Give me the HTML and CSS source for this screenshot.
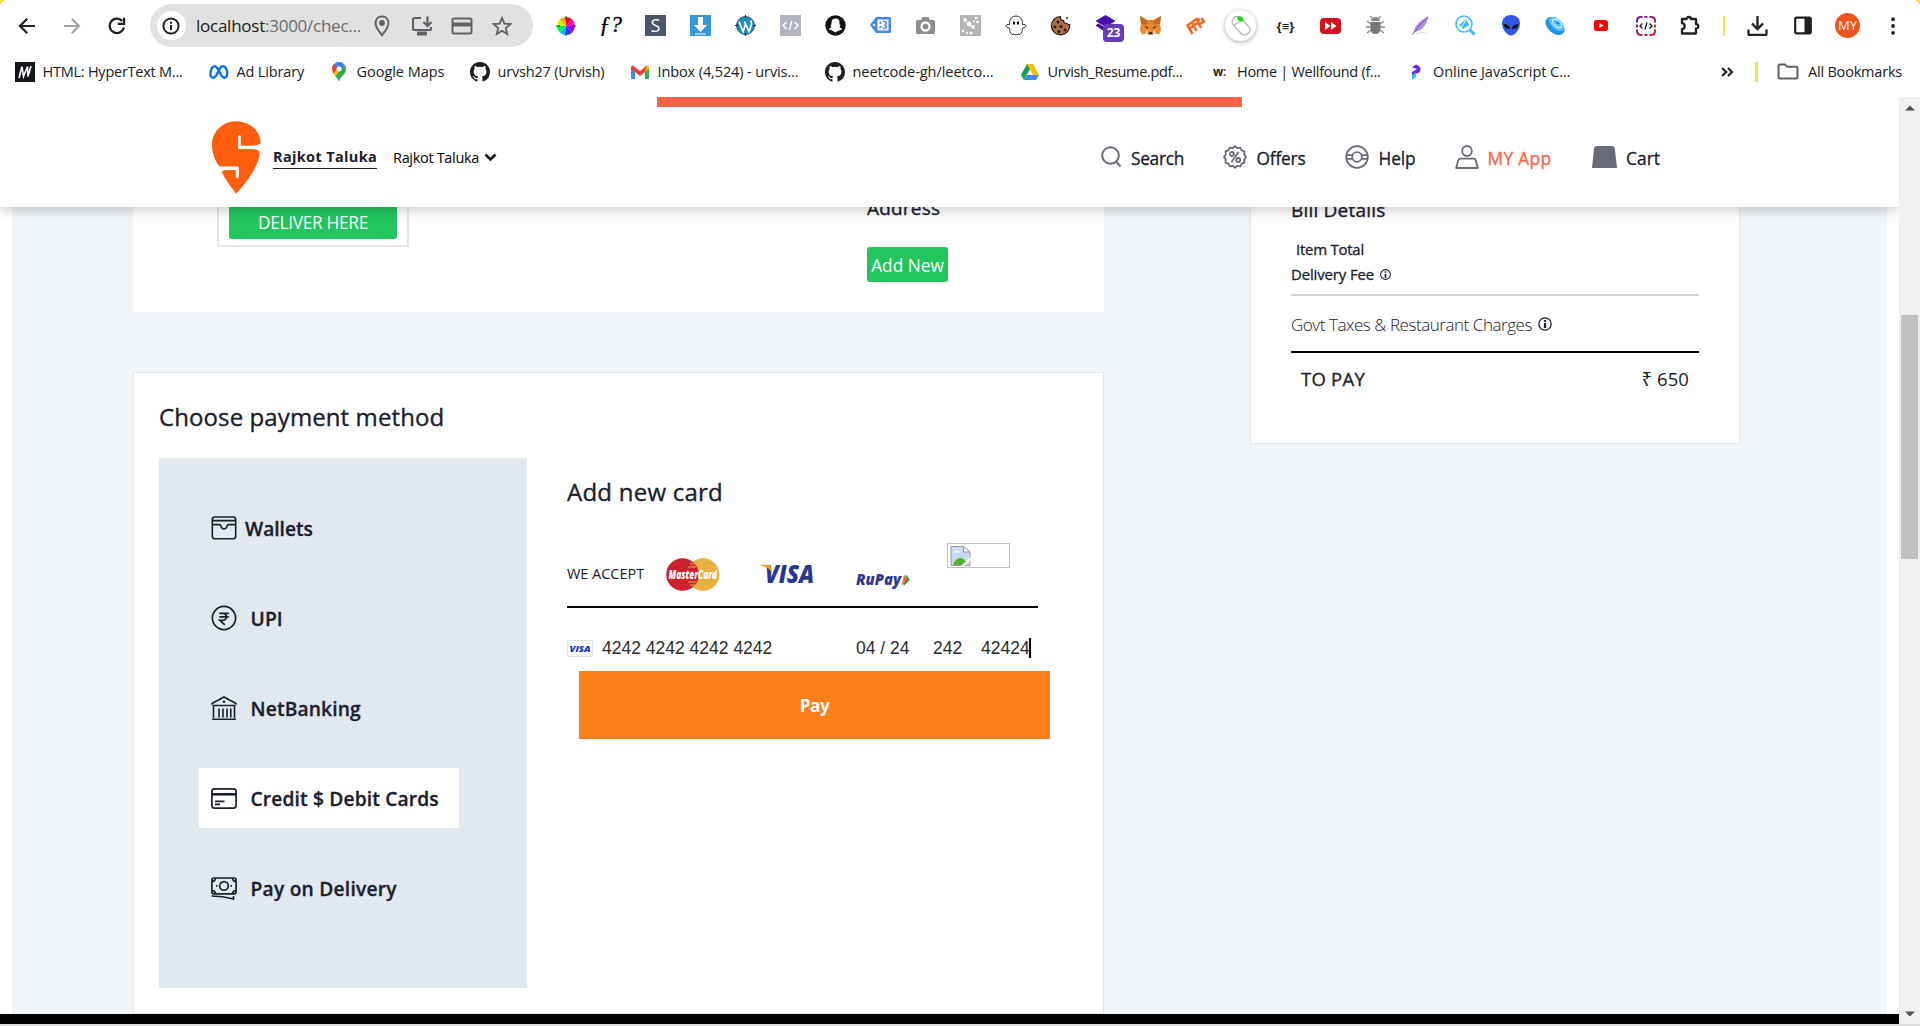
FILE: index.html
```html
<!DOCTYPE html>
<html lang="en">
<head>
<meta charset="utf-8">
<title>Checkout</title>
<link rel="stylesheet" href="styles.css">
</head>
<body>
<div class="browser">
  <div class="toolbar">
    <div class="navcell"><svg width="18" height="18" viewBox="0 0 18 18" fill="none" stroke="#202124" stroke-width="2.2"><path d="M17 9H2.5M9.2 1.8L2 9l7.2 7.2"/></svg></div>
    <div class="navcell"><svg width="18" height="18" viewBox="0 0 18 18" fill="none" stroke="#a3a3a3" stroke-width="2.2"><path d="M1 9h14.500M8.800 1.800L16 9l-7.200 7.200"/></svg></div>
    <div class="navcell"><svg width="18" height="18" viewBox="0 0 18 18" fill="none" stroke="#202124" stroke-width="2.3"><path d="M15.900 10.500A7.200 7.200 0 1 1 14.200 4"/><path d="M16 .8v6.100H9.800"/></svg></div>
    <div class="omnibox">
      <div class="siteinfo"><svg width="18" height="18" viewBox="0 0 18 18" fill="none" stroke="#202124" stroke-width="2"><circle cx="9" cy="9" r="7.600"/><path d="M9 8v5M9 4.800v2"/></svg></div>
      <div class="url">localhost<span class="dim">:3000/chec...</span></div>
      <div class="omnicell"><svg width="18" height="22" viewBox="0 0 18 22"><path d="M9 1.600C5 1.600 2.500 4.600 2.500 8.200c0 4.300 3.800 8.300 6.500 12 2.700-3.700 6.500-7.700 6.500-12 0-3.600-2.500-6.600-6.500-6.600z" fill="none" stroke="#5f6368" stroke-width="2"/><circle cx="9" cy="8" r="2.900" fill="#5f6368"/></svg></div>
      <div class="omnicell"><svg width="22" height="20" viewBox="0 0 22 20" fill="none" stroke="#5f6368" stroke-width="2.200"><path d="M10 2H3.500Q2 2 2 3.500v9Q2 14 3.500 14h15q1.500 0 1.500-1.500V11M16.500.5v9M12.500 6l4 4 4-4"/><path d="M6 17.500h10" stroke-width="4"/></svg></div>
      <div class="omnicell"><svg width="22" height="18" viewBox="0 0 22 18"><rect x="1.500" y="1.500" width="19" height="15" rx="1.500" fill="none" stroke="#5f6368" stroke-width="2"/><path d="M1.500 5.500h19v4h-19z" fill="#5f6368"/></svg></div>
      <div class="omnicell"><svg width="20" height="20" viewBox="0 0 20 20" fill="none" stroke="#5f6368" stroke-width="1.900"><path d="M10 2l2.400 5.600 6 .5-4.600 4 1.400 5.900L10 14.800 4.800 18l1.400-5.900-4.600-4 6-.5z"/></svg></div>
    </div>
    <div class="extensions">
      <div class="ext"><svg width="20" height="20" viewBox="0 0 20 20"><g><path d="M10 10V1A9 9 0 0 1 16.400 3.600z" fill="#f03"/><path d="M10 10l6.400-6.400A9 9 0 0 1 19 10z" fill="#f0c"/><path d="M10 10h9a9 9 0 0 1-2.600 6.400z" fill="#90f"/><path d="M10 10l6.400 6.400A9 9 0 0 1 10 19z" fill="#33f"/><path d="M10 10v9a9 9 0 0 1-6.400-2.600z" fill="#0bf"/><path d="M10 10l-6.400 6.400A9 9 0 0 1 1 10z" fill="#0e5"/><path d="M10 10H1a9 9 0 0 1 2.600-6.400z" fill="#bf0"/><path d="M10 10L3.600 3.600A9 9 0 0 1 10 1z" fill="#fa0"/></g><path d="M10 0v4M10 16v4M0 10h4M16 10h4" stroke="#333" stroke-width="1"/></svg></div>
      <div class="ext fq">ƒ?</div>
      <div class="ext"><span class="sq s">S</span></div>
      <div class="ext"><svg width="21" height="21" viewBox="0 0 21 21"><path d="M0 0h21v21H0z" fill="#3498db"/><path d="M8 2h5v8h4l-6.500 7L4 10h4zM5 18.500h11v1H5z" fill="#fff"/></svg></div>
      <div class="ext"><svg width="21" height="21" viewBox="0 0 21 21"><circle cx="10.500" cy="10.500" r="9" fill="#1c8fc0"/><path d="M4 6.500l4 10 2.500-7-1-3M9.500 6.500l4.500 10 2.500-7q.5-2-1-4" stroke="#fff" stroke-width="1.700" fill="none"/><circle cx="10.500" cy="10.500" r="9" fill="none" stroke="#356"/><path d="M10.500 0v3M10.500 18v3M0 10.500h3M18 10.500h3" stroke="#222"/></svg></div>
      <div class="ext"><svg width="21" height="21" viewBox="0 0 21 21"><path d="M0 0h21v21H0z" fill="#b0b3bf"/><path d="M6.500 7L3 10.500 6.500 14M14.500 7l3.500 3.500-3.500 3.500M11.800 6l-2.500 9" stroke="#fff" stroke-width="1.500" fill="none"/></svg></div>
      <div class="ext"><svg width="21" height="21" viewBox="0 0 21 21"><circle cx="10.500" cy="10.500" r="10.200" fill="#111"/><path d="M10.500 3.500c3 0 4 2 4 4v2l1.300.6-1.200 1.200c.5 1.500 1.400 2.200 2.600 2.600-.4 1-1.700 1-2.500 1.200-.6 1.500-2 .5-4.200 2.400-2.200-1.900-3.600-.9-4.200-2.400-.8-.2-2.100-.2-2.500-1.200 1.200-.4 2.100-1.100 2.600-2.600L5.200 10.100l1.300-.6v-2c0-2 1-4 4-4z" fill="#fff"/></svg></div>
      <div class="ext"><svg width="21" height="17" viewBox="0 0 21 17"><path d="M6 0h13.500Q21 0 21 1.500v13q0 1.500-1.500 1.500H6L0 8z" fill="#4285f4"/><path d="M7.500 2.500h11v11h-11z" fill="#fff"/><circle cx="4" cy="8" r="1.200" fill="#fff"/><path d="M9.500 4.800h2v2h-2zm0 4.200h2v2h-2z" fill="#4285f4"/><path d="M13 4.500h1.500q2 0 1.700 1.800-.2 1.200-1 1.700.8.500 1 1.700.3 1.800-1.700 1.800H13" fill="none" stroke="#4285f4" stroke-width="1.500"/></svg></div>
      <div class="ext"><svg width="19" height="17" viewBox="0 0 19 17"><path d="M2 3h3l1.500-3h6L14 3h3.500Q19 3 19 4.500v11q0 1.500-1.500 1.500h-16Q0 17 0 15.500V4.500Q0 3 2 3z" fill="#8e8e8e"/><circle cx="9.500" cy="9.500" r="4" fill="none" stroke="#fff" stroke-width="2.300"/></svg></div>
      <div class="ext"><svg width="21" height="21" viewBox="0 0 21 21"><path d="M0 0h21v21H0z" fill="#b5b5b5"/><g fill="#fff"><circle cx="5" cy="5" r="2"/><circle cx="9" cy="9" r="2.500"/><circle cx="13" cy="12" r="2"/><circle cx="16" cy="3" r="1.300"/><circle cx="17.500" cy="7" r="1.300"/><circle cx="3" cy="16" r="1.300"/><circle cx="7" cy="18" r="1.300"/><circle cx="11" cy="18" r="1.300"/><circle cx="14" cy="6" r="1"/></g></svg></div>
      <div class="ext"><svg width="22" height="21" viewBox="0 0 22 21"><path d="M4.500 9.500V7.500a6.500 6.500 0 0 1 13 0v2q3.500-.5 3.500 1.300 0 1.700-3.500 2.400.2 4.300-2.500 6.300-2-1-4 .5-2-1.500-4-.5-2.700-2-2.500-6.300Q1 12.500 1 10.800q0-1.800 3.500-1.300z" fill="#fff" stroke="#333" stroke-width="1"/><path d="M9 6.500v3M13 6.500v3" stroke="#111" stroke-width="2"/></svg></div>
      <div class="ext"><svg width="21" height="21" viewBox="0 0 21 21"><path d="M10.500 1.500a3 3 0 0 0 3 4q0 3 3.500 3 1 1.500 2.700 1a9.200 9.200 0 1 1-9.200-8z" fill="#a9714b" stroke="#2e1a12" stroke-width="1.200"/><g fill="#2b1710"><circle cx="8" cy="7" r="1.500"/><circle cx="5" cy="12" r="1.400"/><circle cx="11" cy="11.500" r="1.600"/><circle cx="9" cy="16.500" r="1.500"/><circle cx="15" cy="15" r="1.400"/><circle cx="17" cy="3" r="1"/></g></svg></div>
      <div class="ext stack"><svg width="22" height="21" viewBox="0 0 22 21"><path d="M10.500 0l10 6-10 6-10-6z" fill="#4a0db0"/><path d="M.5 10.500l3-2 7 4.500 7-4.500 3 2-10 6.500z" fill="#3b0a86"/></svg><span class="badge">23</span></div>
      <div class="ext"><svg width="21" height="19" viewBox="0 0 21 19"><path d="M0 0l7.500 4h6L21 0l-1 8 1 6-2 4.500-5-1-1.500 1.500h-4L7 17.500l-5 1L0 14l1-6z" fill="#f0862c"/><path d="M0 0l8 5-1.500 4L1 8zM21 0l-8 5 1.500 4L20 8z" fill="#c96a27"/><path d="M4 10l4 1v2zM17 10l-4 1v2zM8.500 16h4v2h-4z" fill="#263340"/><path d="M6 14l2.500 2-.5 2H5zM15 14l-2.500 2 .5 2h3z" fill="#e3cdb5"/></svg></div>
      <div class="ext"><svg width="20" height="19" viewBox="0 0 20 19" fill="none" stroke="#f26a21" stroke-width="2.500"><path d="M6.500 18L1.500 9.500 10.500 3l4.500 9M6 6.500l4.500 8.500M3.500 12.500l8-5.500M12 2l1.500 3M13 8.500l5-3L15.500 2"/></svg></div>
      <div class="ext"><span class="mouse"><svg width="22" height="22" viewBox="0 0 22 22"><path d="M3 4q2-4 7-2l9 10q2.500 3.500-1 6.500t-6.500.500L2.500 9Q1.500 6 3 4zM4 10l9-5" fill="#fff" stroke="#b4b4b4" stroke-width="1.200"/><path d="M7 1l5 .8 2 3.700-3.500 1.500L8 5z" fill="#1ed41e"/></svg></span></div>
      <div class="ext braces">{≡}</div>
      <div class="ext"><svg width="21" height="16" viewBox="0 0 21 16"><rect width="21" height="16" rx="4" fill="#d0141c"/><path d="M5 4l5.500 4L5 12zM11 4l5.500 4L11 12z" fill="#fff"/></svg></div>
      <div class="ext"><svg width="19" height="19" viewBox="0 0 19 19"><path d="M5 5q0-4 4.500-4T14 5z" fill="#888"/><path d="M4.500 6h10v6q0 6-5 6t-5-6z" fill="#777"/><path d="M1 5l4 3M18 5l-4 3M0 11h5M19 11h-5M1 17l4-3M18 17l-4-3M6 2L4 0M13 2l2-2" stroke="#888" stroke-width="1.300"/></svg></div>
      <div class="ext"><svg width="18" height="20" viewBox="0 0 18 20"><path d="M16.500.5C8 4 3 9 2 16c8-1 12-6 14.500-15.500z" fill="#b190dd"/><path d="M16 1Q6 10 .5 18.500" stroke="#6e46a8" fill="none"/><path d="M3 18q6-2.500 12-1" stroke="#ddd" fill="none"/></svg></div>
      <div class="ext"><svg width="21" height="21" viewBox="0 0 21 21" fill="none" stroke="#35bdf0"><circle cx="9" cy="9" r="8" stroke-width="1.500"/><path d="M14.500 14.500l5 5" stroke-width="3"/><path d="M4 10l7-6 3 6-6 4z" fill="#35bdf0" stroke="none"/><path d="M6 13l5-8" stroke="#fff"/></svg></div>
      <div class="ext"><svg width="20" height="21" viewBox="0 0 20 21"><path d="M10 0c5.500 0 9 3.500 9 8.500C19 14 14 20.500 10 20.500S1 14 1 8.500C1 3.500 4.500 0 10 0z" fill="#3058e8"/><path d="M2.500 9q6 0 6.500 5-5.500.5-6.500-5zM17.500 9q-6 0-6.500 5 5.500.5 6.500-5z" fill="#111"/></svg></div>
      <div class="ext"><svg width="21" height="20" viewBox="0 0 21 20"><ellipse cx="10" cy="10" rx="11" ry="7.200" transform="rotate(42 10 10)" fill="#2094ea"/><ellipse cx="11.500" cy="8" rx="9" ry="5" transform="rotate(42 11.500 8)" fill="#5cc4fb"/><ellipse cx="12" cy="7.500" rx="5.500" ry="3" transform="rotate(42 12 7.500)" fill="none" stroke="#eaf7ff"/><circle cx="13" cy="7" r="1.500" fill="#1686dd"/></svg></div>
      <div class="ext"><svg width="14" height="11" viewBox="0 0 14 11"><rect width="14" height="11" rx="2.800" fill="#f00"/><path d="M5.500 3l4 2.500-4 2.500z" fill="#fff"/></svg></div>
      <div class="ext"><svg width="20" height="20" viewBox="0 0 20 20" fill="none" stroke-width="2"><path d="M1 6.500V5Q1 1 5 1h1.500" stroke="#5b2aa0"/><path d="M8.500 1h3M13.500 1H15q4 0 4 4v1.500M1 8.500v3" stroke="#8e2376"/><path d="M1 13.500V15q0 4 4 4h1.500M8.500 19h3" stroke="#a81d60"/><path d="M19 8.500v3M13.500 19H15q4 0 4-4v-1.500" stroke="#e0232b"/><path d="M6.500 7.500L4 10l2.500 2.500M13.500 7.500L16 10l-2.500 2.500M11 6.500l-2 7" stroke="#111" stroke-width="1.300"/></svg></div>
      <div class="ext"><svg width="21" height="21" viewBox="0 0 21 21"><path d="M2 4h4.800q0-2 2-2t2 2H16v5.200q2.300 0 2.300 2.200T16 13.500v5H2v-4.300q2.700-.4 2.700-3T2 8.200z" fill="none" stroke="#202124" stroke-width="2.300" stroke-linejoin="round"/></svg></div>
    </div>
    <div class="divider"></div>
    <div class="ext"><svg width="21" height="20" viewBox="0 0 21 20" fill="none" stroke="#202124" stroke-width="2.300"><path d="M10.500 0v13M5 7.500l5.500 5.500L16 7.500M1.500 13.500V18q0 1 1 1h16q1 0 1-1v-4.500"/></svg></div>
    <div class="ext"><svg width="18" height="19" viewBox="0 0 18 19"><rect x="1.200" y="1.700" width="15.600" height="15.600" rx="1.500" fill="none" stroke="#202124" stroke-width="2.200"/><path d="M10.500 2h6.500v15h-6.500z" fill="#202124"/></svg></div>
    <div class="ext"><span class="avatar">MY</span></div>
    <div class="ext"><svg width="4" height="18" viewBox="0 0 4 18" fill="#202124"><circle cx="2" cy="2.200" r="1.900"/><circle cx="2" cy="9" r="1.900"/><circle cx="2" cy="15.800" r="1.900"/></svg></div>
  </div>
  <div class="bookmarks">
    <div class="bm b1"><svg width="20" height="20" viewBox="0 0 20 20"><path d="M0 0h20v20H0z" fill="#15141a"/><path d="M4 16L7 4.500l1.500 10 4-10 .5 10L16 4" fill="none" stroke="#fff" stroke-width="1.600"/></svg><span>HTML: HyperText M...</span></div>
    <div class="bm b2"><svg width="20" height="20" viewBox="0 0 20 20"><path d="M1.500 13C1.500 8 3 4.200 5.800 4.200c4 0 5.200 11.500 9.700 11.500 4.500 0 3.200-11.500-1.800-11.500-4.200 0-5 11.500-9.500 11.500-1.700 0-2.700-1-2.700-2.700z" fill="none" stroke="#0a6ff0" stroke-width="2.400"/></svg><span>Ad Library</span></div>
    <div class="bm b3"><svg width="20" height="20" viewBox="0 0 20 20"><path d="M3 7a7 7 0 0 1 14 0z" fill="#4285f4"/><path d="M3 7a7 7 0 0 1 2-5l5 5-5 5Q3 9.500 3 7z" fill="#ea4335"/><path d="M4.500 11.500L10 5l3 3-6.500 7z" fill="#fbbc04"/><path d="M17 7c0 6-5.500 6-7 13-.7-2.500-2-4-3.500-6L15.500 3Q17 5 17 7z" fill="#34a853"/><path d="M6 1.500Q10-1.500 14 1.500L9 7z" fill="#4285f4"/><circle cx="10" cy="7" r="2.500" fill="#fff"/></svg><span>Google Maps</span></div>
    <div class="bm b4"><svg width="20" height="20" viewBox="0 0 16 16"><path fill="#1b1f23" d="M8 0C3.580 0 0 3.580 0 8c0 3.540 2.290 6.530 5.470 7.590.4.070.55-.17.55-.38 0-.19-.01-.82-.01-1.490-2.010.37-2.530-.49-2.690-.94-.09-.23-.48-.94-.82-1.130-.28-.15-.68-.52-.01-.53.630-.01 1.080.58 1.230.82.720 1.210 1.870.87 2.330.66.070-.52.280-.87.510-1.070-1.780-.2-3.640-.89-3.640-3.950 0-.87.310-1.590.820-2.150-.08-.2-.36-1.020.080-2.120 0 0 .67-.21 2.200.82a7.600 7.600 0 0 1 4 0c1.530-1.040 2.200-.82 2.200-.82.440 1.100.160 1.920.080 2.120.510.560.820 1.270.820 2.150 0 3.070-1.870 3.750-3.650 3.950.290.250.540.730.540 1.480 0 1.070-.01 1.930-.01 2.200 0 .210.150.460.550.380A8.010 8.010 0 0 0 16 8c0-4.420-3.580-8-8-8z"/></svg><span>urvsh27 (Urvish)</span></div>
    <div class="bm b5"><svg width="20" height="20" viewBox="0 0 20 20"><path d="M1 5v11q0 1 1 1h3V8z" fill="#4285f4"/><path d="M19 5v11q0 1-1 1h-3V8z" fill="#34a853"/><path d="M15 5l2-1.500q2 0 2 2V7l-4 3z" fill="#fbbc04"/><path d="M1 7V5.500q0-2 2-2L10 9l7-5.500L15 10l-5 4-5-4z" fill="#ea4335"/></svg><span>Inbox (4,524) - urvis...</span></div>
    <div class="bm b6"><svg width="20" height="20" viewBox="0 0 16 16"><path fill="#1b1f23" d="M8 0C3.580 0 0 3.580 0 8c0 3.540 2.290 6.530 5.470 7.590.4.070.55-.17.55-.38 0-.19-.01-.82-.01-1.490-2.010.37-2.530-.49-2.690-.94-.09-.23-.48-.94-.82-1.130-.28-.15-.68-.52-.01-.53.630-.01 1.080.58 1.230.82.720 1.210 1.870.87 2.330.66.070-.52.280-.87.510-1.070-1.780-.2-3.640-.89-3.640-3.950 0-.87.310-1.590.820-2.150-.08-.2-.36-1.020.080-2.120 0 0 .67-.21 2.200.82a7.600 7.600 0 0 1 4 0c1.530-1.040 2.200-.82 2.200-.82.440 1.100.160 1.920.080 2.120.510.560.820 1.270.820 2.150 0 3.070-1.870 3.750-3.650 3.950.290.250.540.730.540 1.480 0 1.070-.01 1.930-.01 2.200 0 .210.150.460.550.380A8.010 8.010 0 0 0 16 8c0-4.420-3.580-8-8-8z"/></svg><span>neetcode-gh/leetco...</span></div>
    <div class="bm b7"><svg width="20" height="20" viewBox="0 0 20 20"><path d="M7 2h6L7 12.500l-3 5.500-3-5z" fill="#0f9d58"/><path d="M7 2h6l6 11h-6z" fill="#fbbc04"/><path d="M7 13h12l-3 5H4z" fill="#4285f4"/><path d="M1 13h3l3-1-3 6z" fill="#34a853"/></svg><span>Urvish_Resume.pdf...</span></div>
    <div class="bm b8"><span class="wf">w<i>:</i></span><span>Home | Wellfound (f...</span></div>
    <div class="bm b9"><svg width="20" height="20" viewBox="0 0 20 20"><path d="M6 5.500L10 2.500q4.500 1.500 4.500 5t-4 4L6 14v-4l5-3z" fill="#6a25f4"/><path d="M6 13l4-2.500V15l-4 3z" fill="#22c8f0"/></svg><span>Online JavaScript C...</span></div>
    <div class="more"><svg width="13" height="10" viewBox="0 0 13 10" fill="none" stroke="#202124" stroke-width="2.100"><path d="M1.200 1L5.200 5l-4 4M7 1l4 4-4 4"/></svg></div>
    <div class="divider d2"></div>
    <div class="bm all"><svg width="22" height="17" viewBox="0 0 22 17"><path d="M3 1.500h5l2.200 2.200H19q1.500 0 1.500 1.500v8.800q0 1.500-1.500 1.500H3Q1.500 15.500 1.500 14V3Q1.500 1.500 3 1.500z" fill="none" stroke="#5f6368" stroke-width="2"/></svg><span>All Bookmarks</span></div>
  </div>
</div>

<div class="view">
  <div class="page">
    <div class="progress"></div>
    <header class="header">
      <svg class="logo" width="49" height="73" viewBox="0 0 148 219"><path fill="#ff5e0e" d="M73 0C115 0 147 30 147 66Q145 73 118 74L88 74Q87 74 87 72L87 46Q87 42 83 42Q79 42 79 46L79 82Q79 84 82 84L120 84Q144 85 144 96C142 135 105 185 73 219C55 195 36 172 30 152Q30 147 48 147L69 147Q72 147 72 150L72 168Q72 172 76 172Q81 172 81 168L81 140Q81 137 78 137L28 137Q22 137 20 134C8 115 0 95 0 72C0 30 33 0 73 0Z"/></svg>
      <span class="city">Rajkot Taluka</span>
      <span class="area">Rajkot Taluka</span>
      <svg class="chev" width="13" height="9" viewBox="0 0 13 9"><path d="M1.500 1.500l5 5 5-5" fill="none" stroke="#111" stroke-width="2.600"/></svg>
      <nav class="nav">
        <a class="n1"><svg width="21" height="22" viewBox="0 0 21 22" fill="none" stroke="#686b78" stroke-width="2"><circle cx="9.500" cy="9.500" r="8.300"/><path d="M15 15.500l4.500 5"/></svg><span>Search</span></a>
        <a class="n2"><svg width="24" height="24" viewBox="0 0 24 24" fill="none" stroke="#686b78" stroke-width="1.800"><path d="M12 1.300l2.300 1.900 3-.5 1.300 2.700 2.900 1-.2 3L23 12l-1.700 2.600.2 3-2.900 1-1.300 2.700-3-.5L12 22.700l-2.300-1.900-3 .5-1.300-2.700-2.900-1 .2-3L1 12l1.700-2.600-.2-3 2.900-1 1.300-2.700 3 .5z" stroke-linejoin="round"/><circle cx="8.800" cy="9" r="2"/><circle cx="15.200" cy="15" r="2"/><path d="M15.500 7l-7 10"/></svg><span>Offers</span></a>
        <a class="n3"><svg width="24" height="24" viewBox="0 0 24 24" fill="none" stroke="#686b78" stroke-width="1.800"><circle cx="12" cy="12" r="10.800"/><circle cx="12" cy="12" r="4.800"/><path d="M1.500 10.200h5.800M1.500 13.800h5.800M16.700 10.200h5.800M16.700 13.800h5.800"/></svg><span>Help</span></a>
        <a class="n4"><svg width="24" height="24" viewBox="0 0 24 24" fill="none" stroke="#686b78" stroke-width="1.800"><ellipse cx="12" cy="6" rx="4.800" ry="5"/><path d="M1.200 23l2-7.500q.5-1.800 2.200-1.800h13.200q1.700 0 2.200 1.800l2 7.500z" stroke-linejoin="round"/></svg><span>MY App</span></a>
        <a class="n5"><svg width="25" height="22" viewBox="0 0 25 22"><path d="M4.500 0h15.500q2.500 0 2.800 2.500L25 22H0L2 2.500Q2.200 0 4.500 0z" fill="#686b78"/></svg><span>Cart</span></a>
      </nav>
    </header>
    <main class="main">
      <div class="left">
        <section class="address">
          <div class="saved"><button class="deliver">DELIVER HERE</button></div>
          <div class="newaddr"><h3>Address</h3><button class="addnew">Add New</button></div>
        </section>
        <section class="payment">
          <h2>Choose payment method</h2>
          <div class="paybody">
            <ul class="methods">
              <li class="m1"><svg width="26" height="24" viewBox="0 0 26 24" fill="none" stroke="#1a202c" stroke-width="1.600"><rect x="1.300" y="1" width="23.400" height="21.800" rx="2.500"/><path d="M1.300 4.600h23.400M1.300 8.600H8.500q1 0 1.500 1.700 1 2.700 3 2.700t3-2.700q.5-1.700 1.500-1.700h7.200"/></svg><span>Wallets</span></li>
              <li class="m2"><svg width="26" height="26" viewBox="0 0 26 26" fill="none" stroke="#1a202c" stroke-width="1.700"><circle cx="13" cy="13" r="11.600"/><path d="M8.300 8.300h9.500M8.300 11.800h9.500M8.300 8.300h3.500q3.500 0 3.500 3.500t-3.500 3.500H8.800l5 4.500"/></svg><span>UPI</span></li>
              <li class="m3"><svg width="26" height="26" viewBox="0 0 26 26" fill="none" stroke="#1a202c" stroke-width="1.600"><path d="M1 9.800V8.500L13 2l12 6.500v1.300M1.500 10.500h23M1 24.300h24M2.500 23V11M23.500 23V11M8 22.500v-9M12 22.500v-9M16 22.500v-9M19.800 22.500v-9"/><circle cx="13" cy="6.800" r=".5"/></svg><span>NetBanking</span></li>
              <li class="m4 active"><svg width="26" height="21" viewBox="0 0 26 21" fill="none" stroke="#1a202c" stroke-width="1.700"><rect x=".9" y=".9" width="24.200" height="19.200" rx="2.500"/><path d="M4 13.300h9.500M4 16.400h5"/><path d="M1 6.300h24" stroke-width="2.600"/></svg><span>Credit $ Debit Cards</span></li>
              <li class="m5"><svg width="26" height="23" viewBox="0 0 26 23" fill="none" stroke="#1a202c" stroke-width="1.700"><rect x=".9" y="1" width="24.200" height="15.800" rx="2"/><circle cx="13" cy="8.900" r="4.300"/><path d="M1 4.500q3 0 3.500-3M25 4.500q-3 0-3.500-3M1 13.500q3 0 3.500 3M25 13.500q-3 0-3.500 3M.5 19q11 0 22 3v-3"/><path d="M5 8.900h1.500M19.500 8.900H21"/></svg><span>Pay on Delivery</span></li>
            </ul>
            <div class="card">
              <h2>Add new card</h2>
              <div class="accept">
                <span class="we">WE ACCEPT</span>
                <svg class="mc" width="54" height="33" viewBox="0 0 54 33"><circle cx="37" cy="16.500" r="16.300" fill="#e9b040"/><circle cx="16.500" cy="16.500" r="16.300" fill="#cc2131"/><path d="M24 6h5M22 9h8M22 24h8M24 27h5" stroke="#e9b040" stroke-width="1"/><text class="mark mastercard" x="2.500" y="20.500" textLength="48.500" lengthAdjust="spacingAndGlyphs">MasterCard</text></svg>
                <svg class="visa" width="58" height="20" viewBox="0 0 58 20"><text class="mark visaword" x="5" y="18.500" textLength="49" lengthAdjust="spacingAndGlyphs">VISA</text><path d="M.5.700h8q2 0 2.300 1.800l1.300 6.500Q8.500 3 .5 1.200z" fill="#f79a1f"/></svg>
                <svg class="rupay" width="54" height="17" viewBox="0 0 54 17"><text class="mark rupayword" x="0" y="12.500" textLength="45" lengthAdjust="spacingAndGlyphs">RuPay</text><path d="M50 2.500l3.500 5.500-6 6z" fill="#0b8a4a"/><path d="M48 2.500L51.500 8l-6 6z" fill="#f47a20"/></svg>
                <span class="broken"><svg width="21" height="20" viewBox="0 0 21 20"><path d="M1 .500h12.500L20 6v13.500H1z" fill="#c6d9f5" stroke="#9a9a9a"/><path d="M13.500.5V6H20z" fill="#fff" stroke="#9a9a9a"/><path d="M3 19q2-6 7-7 4 0 6 4l-4 3z" fill="#58b030"/><path d="M4 6.500q1.500-3 4-1.500 2 0 2 1.500z" fill="#fff"/><path d="M11 20l10-9v3l-6.500 6z" fill="#fff"/></svg></span>
              </div>
              <div class="entry">
                <svg width="26" height="17" viewBox="0 0 26 17"><rect x=".5" y=".5" width="25" height="16" rx="1" fill="#fff" stroke="#dfe2e6"/><text class="mark badgeword" x="2.500" y="12" textLength="21" lengthAdjust="spacingAndGlyphs">VISA</text></svg>
                <span class="num">4242 4242 4242 4242</span><span class="exp">04 / 24</span><span class="cvc">242</span><span class="zip">42424</span><i class="caret"></i>
              </div>
              <button class="pay">Pay</button>
            </div>
          </div>
        </section>
      </div>
      <aside class="bill">
        <h3>Bill Details</h3>
        <div class="row item">Item Total</div>
        <div class="row fee"><span>Delivery Fee</span><svg width="11" height="11" viewBox="0 0 14 14" fill="none" stroke="#1a202c" stroke-width="1.300"><circle cx="7" cy="7" r="6.200"/><path d="M7 6v5M7 3v1.800" stroke-width="2.200"/></svg></div>
        <div class="row tax"><span>Govt Taxes &amp; Restaurant Charges</span><svg width="14" height="14" viewBox="0 0 14 14" fill="none" stroke="#1a202c" stroke-width="1.300"><circle cx="7" cy="7" r="6.200"/><path d="M7 6v5M7 3v1.800" stroke-width="2.300"/></svg></div>
        <div class="row total"><b>TO PAY</b><span>₹ 650</span></div>
      </aside>
    </main>
    <div class="footer"></div>
  </div>
  <div class="scrollbar">
    <svg width="21" height="21" viewBox="0 0 21 21"><path d="M6 13.500h10l-5-5z" fill="#505050"/></svg>
    <div class="thumb"></div>
    <svg class="down" width="21" height="21" viewBox="0 0 21 21"><path d="M6 8.500h10l-5 5z" fill="#505050"/></svg>
  </div>
</div>
<div class="strip"></div>
</body>
</html>
```
FILE: styles.css
```css
* { box-sizing: border-box; margin: 0; padding: 0; }
body { width: 1920px; height: 1026px; overflow: hidden; background: #fff; font-family: "Open Sans", "Noto Sans", sans-serif; color: #1a202c; }
svg { display: block; flex: none; }
button { border: 0; font-family: inherit; color: #fff; display: block; }
h2, h3 { font-weight: 500; white-space: nowrap; -webkit-text-stroke: .35px currentColor; }
span { white-space: nowrap; }

/* Browser chrome */
.browser { height: 97px; background: linear-gradient(225deg, #ffda52 3px, transparent 3.500px), linear-gradient(135deg, #ffda52 3px, #fff 3.500px); }
.toolbar { display: flex; align-items: center; height: 47px; padding: 4px 0 0 4.500px; }
.navcell, .ext { width: 45px; display: flex; align-items: center; justify-content: center; flex: none; }
.omnibox { width: 383px; height: 43px; margin: 0 10px 0 10.500px; border-radius: 22px; background: #e1e1e1; display: flex; align-items: center; padding-left: 6.500px; flex: none; }
.siteinfo { width: 29px; height: 29px; border-radius: 50%; background: #fff; display: flex; align-items: center; justify-content: center; }
.url { width: 176.500px; padding-left: 10.500px; font-size: 17px; letter-spacing: -.25px; color: #202124; white-space: nowrap; }
.dim { color: #6a6d70; }
.omnicell { width: 40px; display: flex; justify-content: center; }
.extensions { display: flex; align-items: center; }
.fq { font: italic 23px/23px "Liberation Serif", serif; color: #000; padding-bottom: 3px; -webkit-text-stroke: .3px #000; }
.sq { width: 21px; height: 21px; background: #4a5568; color: #fff; font-size: 18px; line-height: 21px; text-align: center; }
.stack { position: relative; }
.badge { position: absolute; left: 20px; top: 9px; width: 21px; height: 18px; border-radius: 4px; background: #673ab7; color: #fff; font-weight: 700; font-size: 12px; line-height: 18px; text-align: center; }
.mouse { width: 31px; height: 31px; border-radius: 50%; background: #fff; box-shadow: 0 1px 4px rgba(0,0,0,.35); display: flex; align-items: center; justify-content: center; }
.braces { font-weight: 700; font-size: 13px; color: #222; }
.divider { width: 2px; height: 20px; margin: 0 10px; background: #fddb5c; flex: none; }
.avatar { width: 25px; height: 25px; border-radius: 50%; background: #f4511e; color: #fff; font-size: 13px; line-height: 25px; text-align: center; }
.bookmarks { display: flex; align-items: center; height: 49px; padding-left: 15px; }
.bm { display: flex; align-items: center; gap: 7.500px; font-size: 14.500px; color: #202124; letter-spacing: -.15px; flex: none; }
.b1 { width: 194px; letter-spacing: -.24px; }
.b2 { width: 120px; }
.b3 { width: 141px; letter-spacing: -.03px; }
.b4 { width: 160px; letter-spacing: -.19px; }
.b5 { width: 195px; letter-spacing: -.11px; }
.b6 { width: 195px; letter-spacing: -.05px; }
.b7 { width: 189.500px; letter-spacing: -.35px; }
.b8 { width: 196px; letter-spacing: -.29px; }
.b9 { width: 315.500px; letter-spacing: -.04px; }
.all { letter-spacing: -.2px; gap: 9px; }
.wf { width: 20px; text-align: center; font-weight: 700; font-size: 12px; }
.wf i { color: #e0232b; font-style: normal; }
.more { width: 34px; }
.d2 { width: 3px; margin: 0 19px 0 0; }

/* Page viewport */
.view { display: flex; height: 927px; }
.page { width: 1899px; display: flex; flex-direction: column; }
.progress { width: 585px; height: 10px; margin-left: 657px; background: #ff6347; }
.header { position: relative; z-index: 2; height: 100px; display: flex; align-items: center; padding-left: 212px; background: #fff; box-shadow: 0 3px 12px rgba(0,0,0,.22); clip-path: inset(0 0 -30px 0); }
.city { width: 104px; margin-left: 12px; font-size: 14.500px; font-weight: 700; letter-spacing: .34px; line-height: 22px; padding-top: 1px; border-bottom: 1px solid #1a202c; }
.area { width: 86px; margin-left: 16px; font-size: 14.500px; letter-spacing: -.32px; color: #000; }
.chev { margin-left: 5px; }
.nav { display: flex; align-items: center; height: 100%; margin-left: 604px; font-size: 17.300px; font-weight: 500; color: #171a29; -webkit-text-stroke: .3px currentColor; }
.nav a { display: flex; align-items: center; flex: none; }
.nav span { padding-top: 2px; }
.n1 { width: 121.500px; gap: 9px; letter-spacing: -.29px; }
.n2 { width: 122px; gap: 10px; letter-spacing: -.18px; }
.n3 { width: 110px; gap: 10px; letter-spacing: -.1px; }
.n4 { width: 137px; gap: 9px; letter-spacing: .37px; }
.n4 span { color: #ff6347; }
.n5 { gap: 9.500px; letter-spacing: .07px; }
.main { display: flex; align-items: flex-start; height: 807px; margin: 0 12px; background: #f1f5f9; overflow: hidden; flex: none; }
.left { width: 971px; margin-left: 121px; }
.address { display: flex; height: 105px; background: #fff; }
.saved { width: 192px; height: 40px; margin-left: 84px; border: 2px solid #e2e8f0; border-top: 0; padding: 0 10px; }
.deliver { width: 168px; height: 35px; margin-top: -3px; border-radius: 3px; background: #22c55e; font-size: 17.300px; letter-spacing: -.31px; padding-top: 1px; }
.newaddr { margin: -13px 0 0 458px; }
.newaddr h3, .bill h3 { font-size: 19px; line-height: 28px; letter-spacing: .2px; }
.addnew { width: 81px; height: 35px; margin-top: 25px; border-radius: 3px; background: #22c55e; font-size: 17.300px; padding-top: 1px; }
.payment { height: 642px; margin-top: 60px; padding: 28px 0 0 25px; background: #fff; border: 1px solid #e2e8f0; }
.payment h2 { font-size: 24px; line-height: 32px; letter-spacing: .1px; }
.paybody { display: flex; margin-top: 25px; }
.methods { width: 368px; height: 530px; padding: 40px 0 0 40px; background: #e2e8f0; display: flex; flex-direction: column; gap: 30px; list-style: none; }
.methods li { width: 260px; height: 60px; padding-left: 12px; display: flex; align-items: center; gap: 13.500px; font-size: 19.200px; font-weight: 600; letter-spacing: .16px; }
.methods span { -webkit-text-stroke: .3px currentColor; }
.methods .m1 { gap: 8px; letter-spacing: 0; }
.methods .m5 { letter-spacing: .24px; }
.methods .active { background: #fff; }
.card { width: 483px; padding: 18px 0 0 40px; }
.card h2 { letter-spacing: .24px; }
.accept { width: 471px; height: 65px; margin-top: 35px; display: grid; grid-template-columns: 99px 94px 96px 91px 63px; align-items: start; border-bottom: 2px solid #000; }
.we { padding-top: 19.500px; font-size: 14.500px; letter-spacing: -.03px; line-height: 22px; }
.mc { margin-top: 15px; }
.visa { margin-top: 21px; }
.rupay { margin-top: 29px; }
.mark { font-style: italic; font-weight: 800; font-family: "Open Sans", sans-serif; }
.mastercard { font-size: 11.500px; fill: #fff; }
.visaword { font-size: 24.500px; fill: #2a3691; }
.rupayword { font-size: 15px; fill: #32388f; }
.badgeword { font-size: 9.500px; fill: #1434cb; }
.broken { height: 25px; border: 1px solid #c0c0c0; padding: 2px; }
.entry { height: 22px; margin: 29px 0 12px; display: flex; align-items: center; font: 17.500px "Liberation Sans", Arial, sans-serif; color: #2b2b2b; }
.entry > * { flex: none; }
.num { width: 254px; margin-left: 9px; }
.exp { width: 77px; }
.cvc { width: 48px; }
.zip { width: 48px; }
.caret { width: 2px; height: 20px; background: #000; }
.pay { width: 471px; height: 68px; margin-left: 12px; background: #fc8019; font-size: 17.300px; font-weight: 700; letter-spacing: -.54px; }
.bill { width: 490px; height: 237px; margin-left: 146px; padding: 0 40px; background: #fff; border: 1px solid #e2e8f0; border-top: 0; }
.bill h3 { margin-top: -11px; }
.row { display: flex; align-items: center; height: 24px; font-size: 15px; font-weight: 500; }
.item, .fee span, .total b { -webkit-text-stroke: .3px currentColor; }
.item { margin-top: 13px; padding-left: 5px; letter-spacing: -.25px; }
.fee { margin-top: 1px; height: 34px; padding-bottom: 8px; border-bottom: 2px solid #d1d5db; gap: 6px; letter-spacing: -.16px; }
.tax { height: 57px; padding: 16px 0 15px; border-bottom: 2px solid #000; font-size: 17px; font-weight: 300; gap: 6px; letter-spacing: -.45px; }
.total { height: 28px; margin-top: 11px; padding: 0 10px; justify-content: space-between; font-size: 18.500px; letter-spacing: .24px; }
.total b { font-weight: 500; }
.total span { font-weight: 400; letter-spacing: .09px; }
.footer { height: 10px; background: #000; flex: none; }
.scrollbar { width: 21px; background: #f0f0f0; display: flex; flex-direction: column; }
.thumb { width: 17px; height: 244px; margin: 197px 0 0 2px; background: #c1c1c1; }
.down { margin-top: auto; }
.strip { height: 2px; background: #dcdcdc; }
```
